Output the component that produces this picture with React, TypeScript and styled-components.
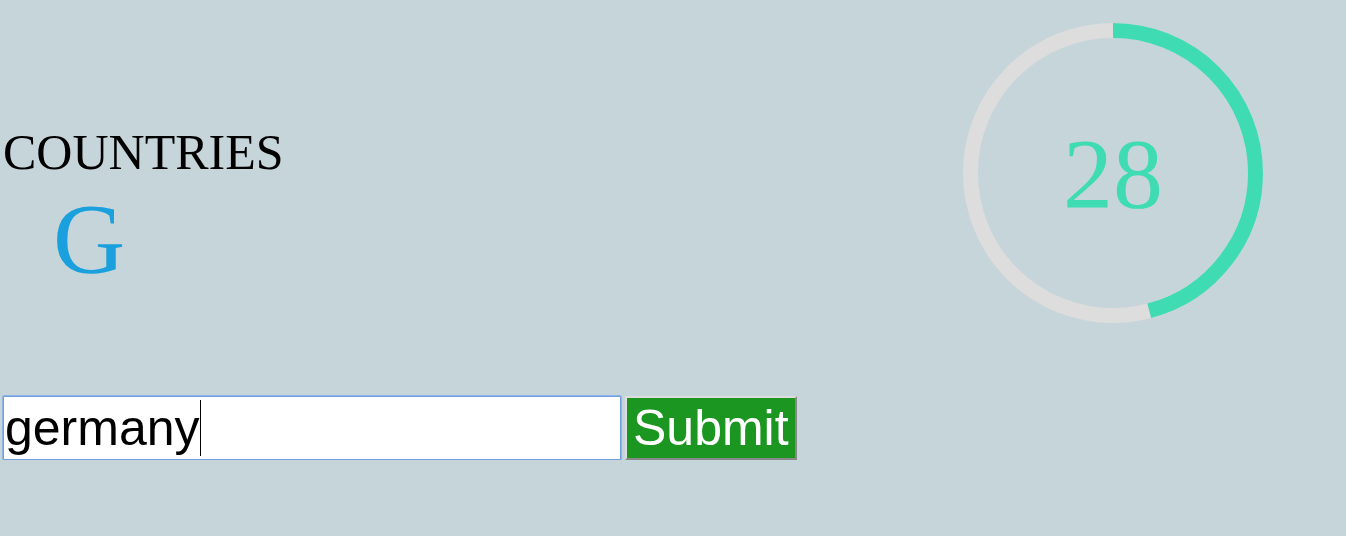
import React, { useState } from "react";
import styled, { createGlobalStyle } from "styled-components";

const GlobalStyle = createGlobalStyle`
  body {
    margin: 0;
    background: #c6d5da;
    font-family: "Liberation Serif", "Times New Roman", serif;
  }
`;

const Page = styled.main`
  display: grid;
  grid-template-columns: 17fr 9fr;
`;

const Game = styled.section`
  padding: 123px 0 0 3px;
`;

const Category = styled.h1`
  margin: 0;
  font-size: 50px;
  font-weight: 400;
  line-height: 58px;
  color: #000;
`;

const Letter = styled.p`
  margin: 0 0 99px 50px;
  font-size: 100px;
  line-height: 116px;
  color: #1aa1dd;
`;

const AnswerForm = styled.form`
  display: flex;
  gap: 4px;
  font-family: "Liberation Sans", Arial, sans-serif;
  font-size: 50px;
`;

const AnswerField = styled.div`
  position: relative;
  width: 618px;
`;

const AnswerInput = styled.input`
  display: block;
  box-sizing: border-box;
  width: 100%;
  height: 64px;
  padding: 0 1px;
  border: 1px solid #6f9de0;
  border-radius: 1px;
  outline: none;
  box-shadow: 0 0 0 1px #8fb4e6;
  background: #fff;
  color: #000;
  caret-color: transparent;
  font: inherit;
`;

const Caret = styled.span`
  position: absolute;
  top: 4px;
  left: 197px;
  width: 1px;
  height: 56px;
  background: #000;
`;

const SubmitButton = styled.button`
  box-sizing: border-box;
  height: 64px;
  padding: 0 6px;
  border: 2px solid;
  border-color: #ddd #888 #888 #ddd;
  border-radius: 0;
  background: #1b9620;
  color: #fff;
  font: inherit;
`;

const TimerPanel = styled.aside`
  display: flex;
  justify-content: center;
  align-items: flex-start;
  padding-top: 23px;
`;

const Dial = styled.svg`
  display: block;
  width: 300px;
  height: 300px;
`;

const Ring = styled.circle<{ $color: string }>`
  fill: none;
  stroke: ${({ $color }) => $color};
  stroke-width: 15;
`;

const Seconds = styled.text`
  fill: #3fdbb3;
  font-size: 100px;
  text-anchor: middle;
`;

const ROUND_LENGTH = 61;

function Timer({ seconds }: { seconds: number }) {
  return (
    <Dial viewBox="0 0 300 300" role="timer">
      <Ring $color="#ddd" cx="150" cy="150" r="142.5" />
      <Ring
        $color="#3fdbb3"
        cx="150"
        cy="150"
        r="142.5"
        pathLength={ROUND_LENGTH}
        strokeDasharray={`${seconds} ${ROUND_LENGTH}`}
        transform="rotate(-90 150 150)"
      />
      <Seconds x="150" y="184">
        {seconds}
      </Seconds>
    </Dial>
  );
}

export default function App() {
  const [answer, setAnswer] = useState("germany");
  return (
    <>
      <GlobalStyle />
      <Page>
        <Game>
          <Category id="category">COUNTRIES</Category>
          <Letter>G</Letter>
          <AnswerForm onSubmit={(event) => event.preventDefault()}>
            <AnswerField>
              <AnswerInput
                type="text"
                aria-labelledby="category"
                value={answer}
                onChange={(event) => setAnswer(event.target.value)}
              />
              <Caret />
            </AnswerField>
            <SubmitButton type="submit">Submit</SubmitButton>
          </AnswerForm>
        </Game>
        <TimerPanel>
          <Timer seconds={28} />
        </TimerPanel>
      </Page>
    </>
  );
}
